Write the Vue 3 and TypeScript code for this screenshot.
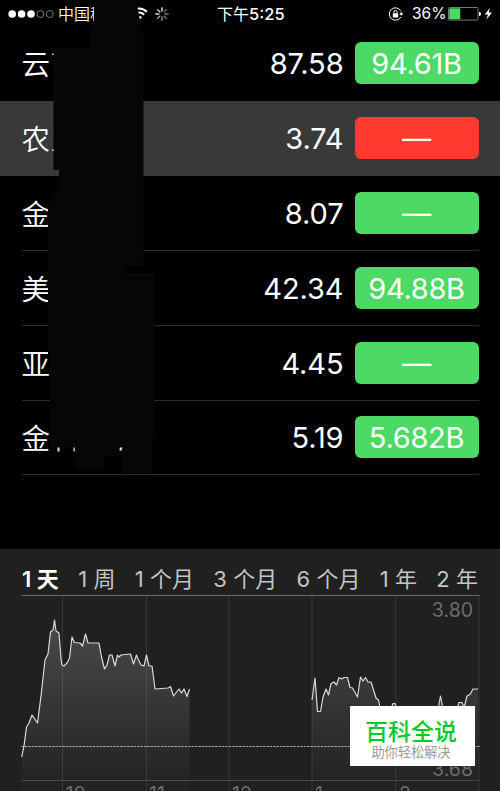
<script setup lang="ts">
interface Stock {
  name: string
  price: string
  cap: string
  down?: boolean
  selected?: boolean
}

const stocks: Stock[] = [
  { name: '云', price: '87.58', cap: '94.61B' },
  { name: '农', price: '3.74', cap: '—', down: true, selected: true },
  { name: '金', price: '8.07', cap: '—' },
  { name: '美', price: '42.34', cap: '94.88B' },
  { name: '亚', price: '4.45', cap: '—' },
  { name: '金', price: '5.19', cap: '5.682B' },
]

const ranges = ['1 天', '1 周', '1 个月', '3 个月', '6 个月', '1 年', '2 年']
const gridX = [62.5, 146.5, 229, 312, 395.7, 479]
const hours = [
  { x: 65.5, label: '10' },
  { x: 149, label: '11' },
  { x: 232, label: '12' },
  { x: 315, label: '1' },
  { x: 399, label: '2' },
]
const spokes = [1, 0.45, 0.5, 0.55, 0.65, 0.75, 0.85, 0.95]

const morning =
  '21.7,757 24,746 26.5,727 29,723 32,715 37.5,723 41,696 45,660 48,654 50.5,632 53,630 54.5,620 56,631 59,633 61,659 62,665 64,666 67,663 69.5,658 72,637 74.5,642.5 80,643 82.5,646 85.5,634 88,643 99,643 101.5,657 104.5,669 107,665 109.5,655 112,655 115,666 117.5,655 119,657 121,655 130.5,654 133.5,664 136.5,655 138,659 141,665 144,666 146.5,655 149,666 152,666 155,689 168,688 170.5,686.5 173.5,696 179,689 181.5,693 184,689 187,696.5 189.5,689'
const afternoon =
  '312,700 315,678 317.5,711.5 320.5,711.5 323,697 326,689 328.5,695 331,683.5 334,682 336.5,685 339,677.5 341.5,679 344,677.5 347.5,677.5 350,687.5 352.5,688 357.5,697 360.5,677 363,681 365.5,677.5 368,682 371,682 376,698 378.5,700 380,708 391,709 393,703.5 395,703.5 397,709 438,709 440.5,696 443,709 457,709 459,702.5 462,702.5 464,708 467,696 470,694.5 473,689 478,689'
</script>

<template>
  <main class="screen">
    <header class="status">
      <svg class="signal" viewBox="0 0 46 10" width="46" height="10">
        <circle v-for="i in 3" :key="i" :cx="4.2 + (i - 1) * 9.4" cy="5" r="3.8" fill="#fff" />
        <circle v-for="i in 2" :key="'e' + i" :cx="32.4 + (i - 1) * 9.4" cy="5" r="3.5" fill="none" stroke="#aaa" stroke-width=".7" />
      </svg>
      <span class="carrier">中国移</span>
      <svg class="wifi" viewBox="0 0 18 14" width="18" height="14" fill="none" stroke="#fff" stroke-width="2">
        <path d="M1.2 4.8A11 11 0 0 1 16.8 4.8M3.8 7.7A7.3 7.3 0 0 1 14.2 7.7" />
        <path d="M6 10.2A4.2 4.2 0 0 1 12 10.2L9 13.3Z" fill="#fff" stroke="none" />
      </svg>
      <svg class="spinner" viewBox="-7 -7 14 14" width="14" height="14">
        <line
          v-for="(o, i) in spokes" :key="i" x1="0" y1="-3" x2="0" y2="-6.2"
          stroke="#fff" stroke-width="1.3" stroke-linecap="round" :stroke-opacity="o" :transform="`rotate(${i * 45})`"
        />
      </svg>
      <span class="clock">下午<b>5:25</b></span>
      <svg class="lock" viewBox="0 0 16 14" width="16" height="14" fill="none" stroke="#fff">
        <path d="M12.7 3.7A6.2 6.2 0 1 0 12.9 10M13.1 4.8V7" stroke-width="1" />
        <path d="M11.2 6.4h4.2L13.3 8.8Z" fill="#fff" stroke="none" />
        <rect x="4.8" y="6.2" width="5.4" height="4.2" rx=".5" fill="#fff" stroke="none" />
        <path d="M5.9 6.4V5a1.6 1.6 0 0 1 3.2 0v1.4" stroke-width="1" />
      </svg>
      <span class="percent">36%</span>
      <svg class="battery" viewBox="0 0 46 14" width="46" height="14">
        <rect x=".5" y=".5" width="29.5" height="12.6" rx="1" fill="none" stroke="#777" />
        <rect x="1.3" y="1.3" width="11" height="11" fill="#4cd964" />
        <path d="M31 4.7q2 .2 2 2.2t-2 2.2Z" fill="#fff" />
        <path d="M42 .8 36.8 7.5H40L38.4 12.6 44 5.6H40.7Z" fill="#fff" />
      </svg>
    </header>

    <ul class="list">
      <li v-for="(s, i) in stocks" :key="i" class="row" :class="{ selected: s.selected, plain: i === 0 }">
        <div class="inner">
          <span class="name">{{ s.name }}</span>
          <span class="price">{{ s.price }}</span>
          <span class="badge" :class="{ down: s.down }">{{ s.cap }}</span>
        </div>
      </li>
    </ul>

    <section class="panel">
      <nav class="ranges">
        <span v-for="(r, i) in ranges" :key="r" :class="{ active: i === 0 }">{{ r }}</span>
      </nav>
      <svg class="chart" viewBox="0 595 500 196" width="500" height="196">
        <defs>
          <linearGradient id="area" gradientUnits="userSpaceOnUse" x1="0" y1="620" x2="0" y2="791">
            <stop offset="0" stop-color="#4a4a4a" />
            <stop offset="1" stop-color="#212121" />
          </linearGradient>
          <linearGradient id="area2" gradientUnits="userSpaceOnUse" x1="0" y1="670" x2="0" y2="791">
            <stop offset="0" stop-color="#3c3c3c" />
            <stop offset="1" stop-color="#212121" />
          </linearGradient>
        </defs>
        <polygon :points="`21.7,791 ${morning} 189.5,791`" fill="url(#area)" />
        <polygon :points="`312,791 ${afternoon} 478,791`" fill="url(#area2)" />
        <g stroke="#fff" stroke-opacity=".1">
          <line v-for="x in gridX" :key="x" :x1="x" :x2="x" y1="596" y2="791" />
        </g>
        <line x1="21.5" x2="479.5" y1="780.5" y2="780.5" stroke="#484848" />
        <line x1="21.5" x2="479.5" y1="595.2" y2="595.2" stroke="#6a6a6a" stroke-width="1.6" />
        <line x1="21.5" x2="479.5" y1="746.5" y2="746.5" stroke="#aaa" stroke-dasharray="2.4 1" />
        <g fill="none" stroke="#d8d8d8" stroke-width="1.2" stroke-linejoin="round">
          <polyline :points="morning" />
          <polyline :points="afternoon" />
        </g>
        <g class="axis">
          <text x="473" y="616.7" text-anchor="end">3.80</text>
          <text x="473" y="776" text-anchor="end">3.68</text>
          <text v-for="h in hours" :key="h.label" :x="h.x" y="800.5">{{ h.label }}</text>
        </g>
      </svg>
    </section>

    <svg class="mask" viewBox="0 0 160 480" width="160" height="480">
      <path
        fill="#060606"
        d="M94 0H136L140 20V33H143.5V266H125.5V273.5H154.300V437H152.5V473.5H122V456H104.5V469H75V447.5H50V355H48V205L54 192H59V170H53.5V48H90V30L94 20Z"
      />
      <path d="M52 53.5h1.5v1.5H52zM52 149.5h1.5v1.5H52zM57.5 447.5h2v4h-2zM73.5 447.5h1.3v4h-1.3zM120 447.5h2.6l-1.5 3.5-1.8-.8z" fill="#ddd" />
    </svg>

    <aside class="stamp">
      <strong>百科全说</strong>
      <small>助你轻松解决</small>
    </aside>
  </main>
</template>

<style>
body {
  margin: 0;
  background: #000;
}
</style>

<style scoped>
.screen {
  position: relative;
  width: 500px;
  height: 791px;
  overflow: hidden;
  background: #000;
  color: #fff;
  font-family: Inter, "Noto Sans CJK SC", sans-serif;
}
.status {
  display: flex;
  align-items: center;
  box-sizing: border-box;
  height: 26.5px;
  padding: 1px 5px 0 8px;
  font-size: 16px;
  line-height: 24px;
  white-space: nowrap;
}
.status svg {
  flex: none;
}
.carrier {
  width: 64px;
  margin-left: 4px;
  overflow: hidden;
  font-weight: 350;
}
.wifi {
  margin-left: 8px;
}
.spinner {
  margin-left: 7px;
}
.clock {
  width: 70px;
  margin-left: 48px;
}
.clock b {
  font-size: 16.5px;
  font-weight: 500;
}
.lock {
  margin-left: 101px;
}
.percent {
  width: 33px;
  margin-left: 8px;
  padding-top: 1px;
  font-size: 15.5px;
}
.battery {
  margin-left: 3px;
}
.list {
  margin: 0;
  padding: 0;
  list-style: none;
}
.row {
  box-sizing: border-box;
  height: 74.82px;
  padding: 0 21.5px;
}
.inner {
  display: flex;
  align-items: center;
  box-sizing: border-box;
  height: 100%;
  border-bottom: 1px solid #2c2c2c;
}
.selected {
  background: #393939;
}
.selected .inner,
.plain .inner {
  border-color: transparent;
}
.name {
  flex: 1;
  padding-top: 4px;
  font-size: 28.5px;
  font-weight: 350;
  line-height: 40px;
}
.price {
  margin-right: 11px;
  padding-top: 1px;
  font-size: 29px;
  font-weight: 400;
  letter-spacing: -0.1px;
}
.badge {
  width: 124px;
  height: 42px;
  border-radius: 6px;
  background: #4cd964;
  font-size: 29px;
  font-weight: 400;
  line-height: 43px;
  letter-spacing: -0.3px;
  text-align: center;
}
.badge.down {
  background: #ff3b30;
}
.panel {
  height: 242px;
  margin-top: 73.58px;
  background: #202020;
}
.ranges {
  display: flex;
  justify-content: space-between;
  box-sizing: border-box;
  height: 46px;
  padding: 14px 22px 0;
  color: #c4c4c4;
  font-size: 22px;
  line-height: 32px;
  white-space: nowrap;
}
.ranges .active {
  color: #fff;
  font-weight: 600;
}
.chart {
  display: block;
}
.axis {
  fill: #6b6b6b;
  font-size: 19.5px;
}
.mask {
  position: absolute;
  top: 0;
  left: 0;
}
.stamp {
  position: absolute;
  top: 706px;
  left: 350px;
  display: flex;
  flex-direction: column;
  align-items: center;
  box-sizing: border-box;
  width: 125px;
  height: 60px;
  padding: 9px 3px 0 0;
  background: #fff;
  font-family: "Noto Sans CJK SC", sans-serif;
}
.stamp strong {
  color: #00cb2c;
  font-size: 23px;
  font-weight: 500;
  line-height: 30px;
}
.stamp small {
  color: #999;
  font-size: 13.2px;
  line-height: 14px;
}
</style>
